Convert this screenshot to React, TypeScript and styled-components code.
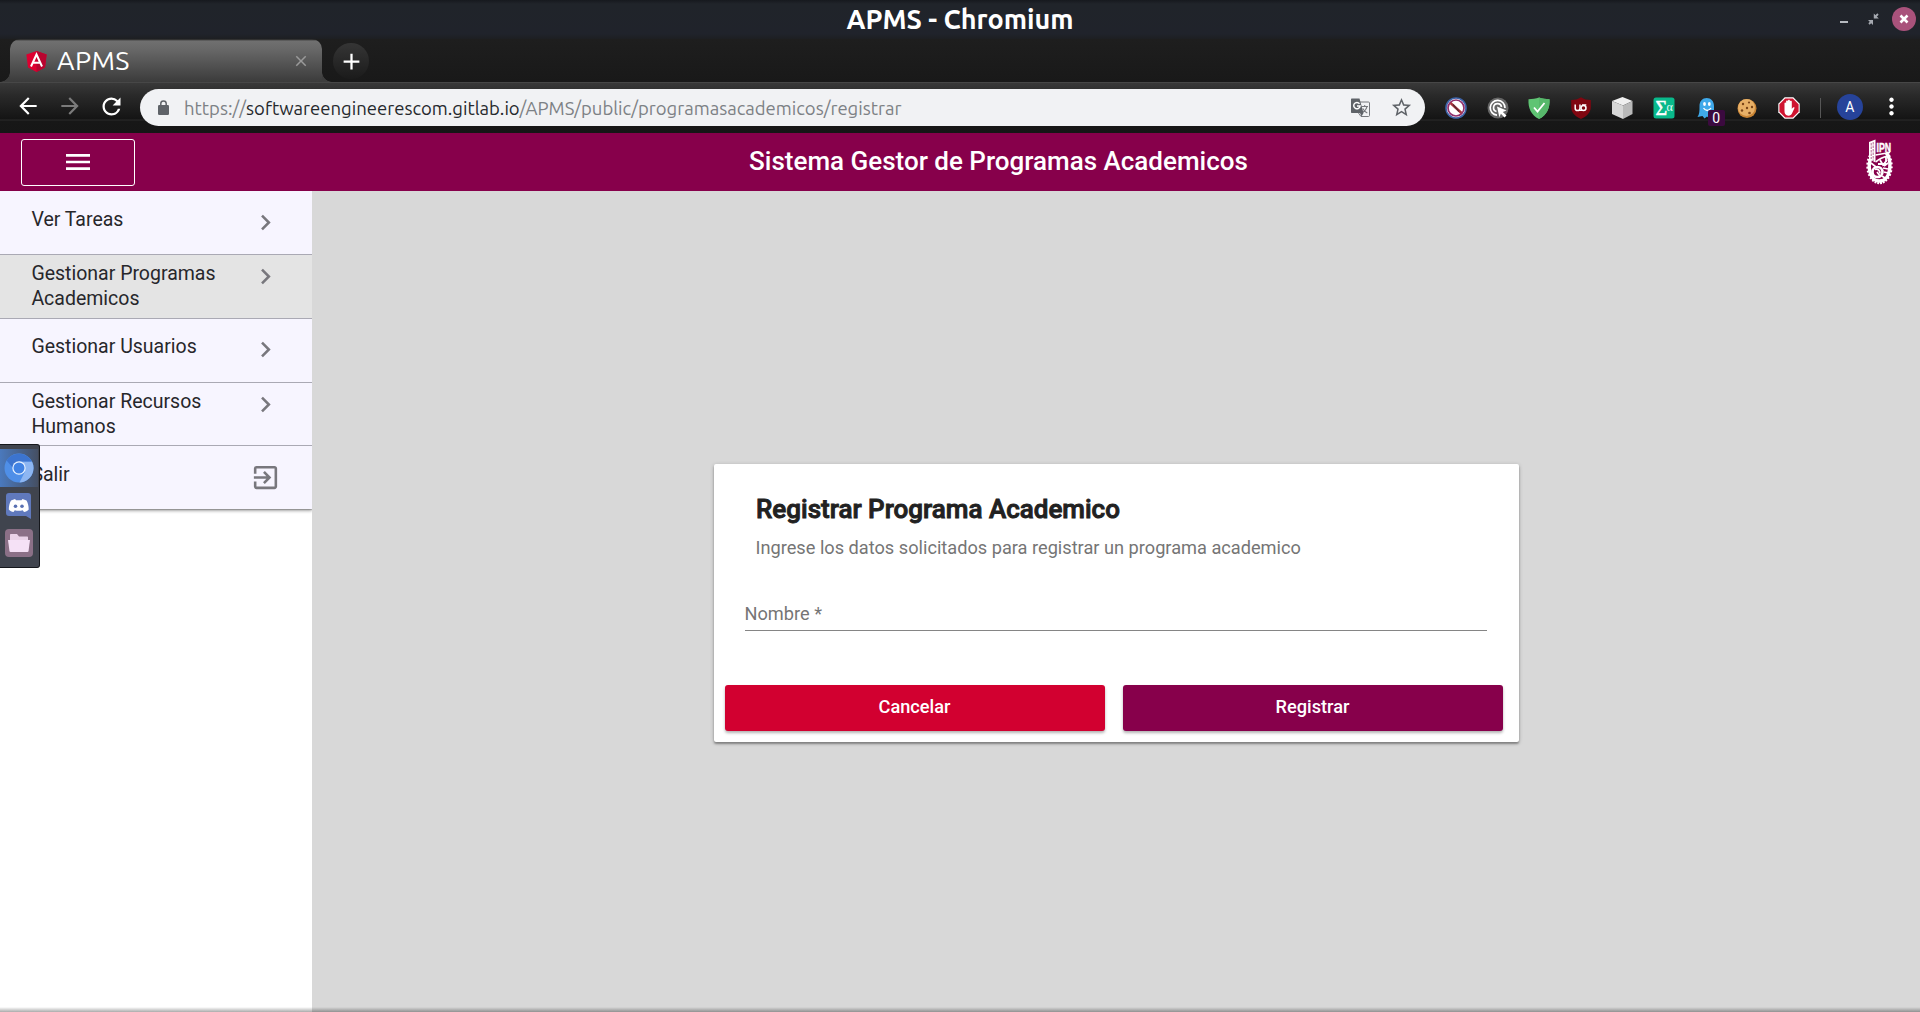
import React from "react";
import styled, { createGlobalStyle, css } from "styled-components";
import {
  MdArrowBack,
  MdArrowForward,
  MdRefresh,
  MdStarBorder,
  MdMenu,
  MdChevronRight,
  MdExitToApp,
  MdClose,
  MdMoreVert,
  MdAdd,
} from "react-icons/md";

const uiFont = `"Ubuntu", "Noto Sans", "Open Sans", sans-serif`;
const appFont = `Roboto, "Liberation Sans", sans-serif`;
const wine = "#87004b";

const GlobalStyle = createGlobalStyle`
  *, *::before, *::after { box-sizing: border-box; }
  body { margin: 0; overflow: hidden; background: #d8d8d8; }
  button { font: inherit; border: 0; padding: 0; background: none; color: inherit; }
  svg { display: block; flex: none; }
`;

const Screen = styled.div`
  position: relative;
  display: flex;
  flex-direction: column;
  width: 1920px;
  height: 1012px;
  overflow: hidden;
  font-family: ${appFont};
`;

/* ---------- window frame ---------- */

const TitleBar = styled.header`
  display: grid;
  grid-template-columns: 1fr auto 1fr;
  height: 39px;
  flex: none;
  color: #fff;
  font-family: ${uiFont};
  background: linear-gradient(#16191e 0, #20242a 4px, #20232b 34px, #1d1f22 39px);
`;

const WindowTitle = styled.h1`
  margin: 0;
  font-size: 27px;
  line-height: 39px;
  font-weight: 700;
  white-space: nowrap;
`;

const WindowControls = styled.div`
  grid-column: 3;
  display: flex;
  justify-content: flex-end;
  align-items: center;
  height: 38px;
  padding-right: 4px;
`;

const CloseWindow = styled.button`
  display: grid;
  place-items: center;
  width: 24px;
  height: 24px;
  margin-left: 13px;
  border-radius: 50%;
  background: #a9527b;
`;

const TabStrip = styled.div`
  display: flex;
  align-items: flex-start;
  height: 43px;
  flex: none;
  padding-left: 10px;
  background: linear-gradient(#1e1e1e, #191919);
`;

const Tab = styled.div`
  position: relative;
  display: flex;
  align-items: center;
  width: 312px;
  height: 43px;
  padding: 1px 12px 0 16px;
  border-radius: 10px 10px 0 0;
  color: #fff;
  font-family: ${uiFont};
  background: linear-gradient(#1c1c1c 0, #707070 2px, #686868 10px, #3b3b3b 43px);

  &::before,
  &::after {
    content: "";
    position: absolute;
    bottom: 0;
    width: 10px;
    height: 10px;
  }
  &::before {
    left: -10px;
    background: radial-gradient(circle at 0 0, transparent 9.5px, #3d3d3d 10px);
  }
  &::after {
    right: -10px;
    background: radial-gradient(circle at 100% 0, transparent 9.5px, #3d3d3d 10px);
  }
`;

const TabLabel = styled.span`
  flex: 1;
  margin-left: 10px;
  padding-bottom: 3px;
  font-size: 27px;
  line-height: 40px;
  letter-spacing: 0.4px;
`;

const NewTab = styled.button`
  display: grid;
  place-items: center;
  width: 36px;
  height: 36px;
  margin: 4px 0 0 11px;
  border-radius: 50%;
  color: #fff;
  background: linear-gradient(#353535, #1b1b1b);
`;

const Toolbar = styled.nav`
  display: flex;
  align-items: center;
  height: 51px;
  flex: none;
  padding: 0 14px 1px 15px;
  border-top: 1px solid #474747;
  color: #fff;
  background: linear-gradient(#393939 0, #2a2a2a 12px, #141414 36px, #2b2b2b 37px, #171717 38px, #161616 51px);
`;

const NavButtons = styled.div`
  display: flex;
  flex: none;
  gap: 15.5px;
  width: 125px;
  padding-bottom: 3px;
`;

const AddressBar = styled.div`
  display: flex;
  flex: none;
  align-items: center;
  width: 1285px;
  height: 37px;
  padding: 0 12px 0 18px;
  border-radius: 19px;
  color: #5f6368;
  background: #f1f2f4;
`;

const Url = styled.span`
  flex: 1;
  margin-left: 15px;
  padding-top: 1px;
  color: #7d8185;
  font-family: ${uiFont};
  font-size: 18.5px;
  line-height: 36px;
  white-space: nowrap;

  b {
    color: #26292d;
    font-weight: 400;
  }
`;

const AddressActions = styled.div`
  display: flex;
  align-items: center;
  gap: 20px;
`;

const Extensions = styled.div`
  display: flex;
  flex: none;
  align-items: center;
  gap: 19.6px;
  margin-left: 20px;
`;

const ExtensionSlot = styled.div`
  position: relative;
  width: 22px;
  height: 22px;
`;

const Count = styled.span`
  position: absolute;
  left: 13px;
  top: 13px;
  width: 17px;
  height: 16px;
  border-radius: 2px;
  color: #fff;
  background: #3b0a3f;
  font: 14px/17px ${appFont};
  text-align: center;
`;

const Divider = styled.i`
  flex: none;
  width: 1px;
  height: 20px;
  margin: 0 16px 0 20px;
  background: #565656;
`;

const Profile = styled.div`
  flex: none;
  width: 26px;
  height: 26px;
  margin-bottom: 2px;
  border-radius: 50%;
  background: #26439a;
  font: 14px/27px ${appFont};
  text-align: center;
`;

const MoreButton = styled.button`
  flex: none;
  margin-left: 15px;
  margin-bottom: 2px;
`;

/* ---------- application ---------- */

const AppBar = styled.header`
  display: flex;
  align-items: center;
  height: 58px;
  flex: none;
  padding: 0 26px 0 21px;
  color: #fff;
  background: ${wine};
`;

const MenuButton = styled.button`
  display: grid;
  place-items: center;
  width: 114px;
  height: 47px;
  border: 1px solid #fff;
  border-radius: 3px;
`;

const AppTitle = styled.h2`
  flex: 1;
  margin: 0;
  padding-bottom: 2px;
  padding-right: 4px;
  font-size: 26px;
  line-height: 34px;
  font-weight: 500;
  text-align: center;
`;

const Body = styled.div`
  display: flex;
  flex: 1;
  min-height: 0;
`;

const Sidebar = styled.aside`
  width: 312px;
  background: #fff;
`;

const MenuList = styled.ul`
  margin: 0;
  padding: 0;
  list-style: none;
  box-shadow: 0 2px 3px rgba(0, 0, 0, 0.32), 0 1px 1px rgba(0, 0, 0, 0.2);
`;

const MenuItem = styled.li<{ $active?: boolean; $lines?: number }>`
  display: flex;
  justify-content: space-between;
  height: 64px;
  padding: ${(p) => (p.$lines === 2 ? "6px" : "16px")} 31px 0 31.4px;
  border-bottom: 1px solid #aaa9b4;
  background: ${(p) => (p.$active ? "#e4e4e4" : "#f7f5ff")};

  &:nth-child(3) {
    padding-top: 15px;
  }
  &:nth-child(4) {
    height: 63px;
  }
  &:last-child {
    border-bottom: 0;
    height: 63px;
  }
`;

const MenuLabel = styled.span`
  width: 200px;
  color: #27272b;
  font-size: 19.5px;
  line-height: 25px;
`;

const MenuGlyph = styled.span`
  color: #78777d;
`;

const Content = styled.main`
  display: flex;
  flex: 1;
  align-items: center;
  justify-content: center;
  padding-top: 3px;
  background: #d8d8d8;
`;

const Card = styled.section`
  width: 805px;
  height: 278px;
  padding: 29px 15px 0 11px;
  border-radius: 2px;
  background: #fff;
  box-shadow: 0 1px 4px rgba(0, 0, 0, 0.22), 0 2px 2px rgba(0, 0, 0, 0.3);
`;

const CardTitle = styled.h3`
  margin: 0 0 0 31.5px;
  color: #212121;
  font-size: 26px;
  line-height: 32px;
  font-weight: 500;
  -webkit-text-stroke: 0.9px #212121;
  white-space: nowrap;
`;

const CardSubtitle = styled.p`
  margin: 10px 0 0 31px;
  color: #757575;
  font-size: 18.2px;
  line-height: 26px;
`;

const Field = styled.label`
  display: block;
  height: 29px;
  margin: 41px 17px 0 20px;
  border-bottom: 1px solid #858585;
  color: #757575;
  font-size: 18.2px;
  line-height: 24px;
`;

const Actions = styled.div`
  display: grid;
  grid-template-columns: 1fr 1fr;
  gap: 18px;
  margin-top: 54px;
  margin-right: 1px;
`;

const ActionButton = styled.button<{ $color: string }>`
  height: 46px;
  padding-bottom: 3px;
  border-radius: 3px;
  color: #fff;
  background: ${(p) => p.$color};
  font-size: 18.2px;
  font-weight: 500;
  box-shadow: 0 2px 3px rgba(0, 0, 0, 0.3);
`;

const BottomShade = styled.div`
  position: absolute;
  inset: auto 0 0 0;
  height: 5px;
  background: linear-gradient(rgba(0, 0, 0, 0), rgba(0, 0, 0, 0.33));
`;

const Dock = styled.div`
  position: absolute;
  left: 0;
  top: 444px;
  display: flex;
  flex-direction: column;
  width: 40px;
  height: 124px;
  padding: 4px 1px 5px 0;
  border: 1px solid #15171c;
  border-left: 0;
  border-radius: 0 3px 3px 0;
  background: #40444e;
`;

const DockItem = styled.div<{ $current?: boolean }>`
  display: grid;
  place-items: center;
  height: 38px;
  ${(p) =>
    p.$current &&
    css`
      background: linear-gradient(90deg, #4a79bd, #454f63);
    `}
`;

/* ---------- drawings ---------- */

const AngularMark = () => (
  <svg width="21" height="21" viewBox="0 0 21 21">
    <path d="M10.5 0 20.6 3.5 19 16.5 10.5 21 2 16.5.4 3.5Z" fill="#dd0031" />
    <path d="M10.5 0 20.6 3.5 19 16.5 10.5 21Z" fill="#b8042f" />
    <path d="m5 15.5 5.5-12 5.5 12M7.2 11.8h6.6" fill="none" stroke="#fff" strokeWidth="2" />
  </svg>
);

const WindowIcons = () => (
  <svg width="42" height="20" viewBox="0 0 42 20">
    <path d="M3 12h8v2H3z" fill="#b6bac0" />
    <path d="m41 5-3.5 3.5M32 15l3.5-3.5" stroke="#a5a9b0" strokeWidth="1.8" />
    <path d="M36.8 4.5v5h5zM36 11h-5l5 5z" fill="#a5a9b0" />
  </svg>
);

const Padlock = () => (
  <svg width="11" height="15" viewBox="0 0 11 15">
    <rect y="5" width="11" height="10" rx="1.2" fill="#5f6368" />
    <path d="M2.8 6V3.6a2.7 2.7 0 0 1 5.4 0V6" fill="none" stroke="#5f6368" strokeWidth="1.5" />
  </svg>
);

const TranslatePages = () => (
  <svg width="19" height="19" viewBox="0 0 19 19">
    <path d="M7.5 4h10c.6 0 1 .4 1 1v12.5c0 .6-.4 1-1 1H10L7.5 15Z" fill="#f1f2f4" stroke="#77797d" />
    <path d="M10.5 8.500h6.500M13.700 7v1.500M16 8.500c-.5 2.500-2.500 4.800-4.500 6M11.800 10.500c1 1.800 2.500 3.500 4.500 4.500" fill="none" stroke="#77797d" strokeWidth="1.1" />
    <path d="M1 .5h7.500l4 14.500H1c-.6 0-1-.4-1-1v-12.500c0-.6.4-1 1-1Z" fill="#5f6368" />
    <path d="M8.500 5.700a3.200 3.200 0 1 0 .6 2.300H6" fill="none" stroke="#fff" strokeWidth="1.5" />
    <path d="M9 15h3.500L10.500 18.500Z" fill="#5f6368" />
  </svg>
);

const BlockedDisc = () => (
  <svg width="22" height="22" viewBox="0 0 22 22">
    <circle cx="11" cy="11" r="10" fill="#fff" stroke="#3d63a8" strokeWidth="1.6" />
    <circle cx="11" cy="11" r="8" fill="#fff" stroke="#8f2f6c" strokeWidth="1.7" />
    <path d="m5.500 6 11 10" stroke="#a8343c" strokeWidth="2.4" />
    <path d="m8 7.500 6 7" stroke="#5a2a30" strokeWidth="1.2" />
  </svg>
);

const ClickTarget = () => (
  <svg width="22" height="22" viewBox="0 0 22 22">
    <circle cx="11" cy="11" r="10.5" fill="#656565" />
    <g fill="none" stroke="#fff" strokeWidth="1.7">
      <path d="M10 18.2A7.4 7.4 0 1 1 18 11" />
      <path d="M9.5 14.5A4 4 0 1 1 14.5 10" />
    </g>
    <path d="m10 9.5 9.5 4-3.7 1.4 3.7 3.6-2 2-3.6-3.7-1.5 3.4Z" fill="#fff" />
  </svg>
);

const GreenShield = () => (
  <svg width="22" height="22" viewBox="0 0 22 22">
    <path d="M11 .5c3 1.200 7 1.700 10.500 1.700C22 11 19 18 11 22 3 18 0 11 .5 2.200 4 2.200 8 1.700 11 .5Z" fill="#5fc473" />
    <path d="M11 .5c3 1.200 7 1.700 10.500 1.700C22 11 19 18 11 22Z" fill="#57b86b" />
    <path d="m6 10.500 3.500 4L16.500 6" fill="none" stroke="#fff" strokeWidth="1.8" />
  </svg>
);

const DarkShield = () => (
  <svg width="22" height="22" viewBox="0 0 22 22">
    <path d="M11 .3c3 2.200 6 2.700 9.800 2.700V10c0 6-4.500 9.500-9.800 12C5.700 19.500 1.200 16 1.200 10V3C5 3 8 2.500 11 .3Z" fill="#800610" />
    <path d="M5.200 7.500v3.700a2.400 2.400 0 0 0 4.800 0V7.500" fill="none" stroke="#fff" strokeWidth="1.5" />
    <circle cx="13.5" cy="11" r="2.5" fill="none" stroke="#fff" strokeWidth="1.5" />
    <path d="M9 13.500h4.500M12 7.800h4.300" stroke="#fff" strokeWidth="1.2" />
  </svg>
);

const Cube = () => (
  <svg width="22" height="22" viewBox="0 0 22 22">
    <path d="M11.500 0 21.500 4 12 8.500 1 4Z" fill="#efefef" />
    <path d="M1 4 12 8.500V22L1 17Z" fill="#d6d6d6" />
    <path d="M21.500 4 12 8.500V22l9.500-5Z" fill="#b9b9b9" />
  </svg>
);

const SigmaTile = () => (
  <svg width="22" height="22" viewBox="0 0 22 22">
    <rect x=".5" y=".5" width="21" height="21" rx="2.5" fill="#09b98b" />
    <text x="2.5" y="18" fill="#fff" stroke="#fff" strokeWidth=".5" fontFamily="Liberation Serif, serif" fontSize="20">
      Σ
    </text>
    <text x="13.5" y="14" fill="#e6fff8" fontFamily="Liberation Serif, serif" fontSize="12">
      α
    </text>
  </svg>
);

const Ghost = () => (
  <svg width="22" height="22" viewBox="0 0 22 22">
    <path d="M4.500 9C4.500 4 7.500 1 11.700 1S19 4 19 9v11l-2-1-2.500 2.500-2.500-2-2.500 2-2-2.500L2.500 20c2-3 2-6 2-11Z" fill="#3fa9ea" />
    <ellipse cx="9.5" cy="7" rx="1.4" ry="2" fill="#fff" />
    <ellipse cx="14.3" cy="7" rx="1.4" ry="2" fill="#fff" />
    <path d="M8.500 11c2 3.300 5.500 3.300 7.500 0" fill="none" stroke="#fff" strokeWidth="1.3" />
  </svg>
);

const Cookie = () => (
  <svg width="22" height="22" viewBox="0 0 22 22">
    <circle cx="11" cy="11.5" r="9.5" fill="#c98434" />
    <circle cx="10.5" cy="10.5" r="8.5" fill="#e8b067" />
    <g fill="#7a4519">
      <circle cx="7" cy="7" r="1.2" />
      <circle cx="13" cy="5.5" r="1.1" />
      <circle cx="11" cy="11" r="1.2" />
      <circle cx="16" cy="10" r="1.2" />
      <circle cx="6" cy="13.5" r="1.2" />
      <circle cx="13.5" cy="16" r="1.3" />
    </g>
  </svg>
);

const StopHand = () => (
  <svg width="22" height="22" viewBox="0 0 22 22">
    <path d="M6.700.3h8.600l6.400 6.400v8.600l-6.400 6.400H6.700L.3 15.300V6.700Z" fill="#fff" />
    <path d="M7.200 1.400h7.600l5.800 5.800v7.600l-5.800 5.800H7.200l-5.800-5.800V7.200Z" fill="#cf1430" />
    <path d="M6.500 11V6.300c0-1.200 1.600-1.200 1.600 0V4.500c0-1.300 1.900-1.300 1.900 0v-.7c0-1.300 1.900-1.300 1.900 0v1c0-1.300 1.900-1.300 1.900 0V12c1-2.200 3-2 2.700-.9l-2.300 5c-.8 2-2 2.600-3.800 2.600-2.800 0-3.900-2-3.900-4.400Z" fill="#fff" />
  </svg>
);

const gearTeeth = Array.from({ length: 21 }, (_, i) => -48 + (i * 262) / 20);

const InstituteCrest = () => (
  <svg width="28" height="46" viewBox="0 0 28 46">
    <path d="M20 13.500C26.500 20 25.500 42 13.500 42 3 42 2 27 4.500 20" fill="none" stroke="#fff" strokeWidth="3.400" />
    {gearTeeth.map((deg) => {
      const a = (deg * Math.PI) / 180;
      return (
        <path
          key={deg}
          d={`M${13.5 + 10.5 * Math.cos(a)} ${27 + 15.5 * Math.sin(a)}L${13.5 + 13.2 * Math.cos(a)} ${27 + 18.3 * Math.sin(a)}`}
          stroke="#fff"
          strokeWidth="1.9"
        />
      );
    })}
    <path d="M3 3 9.500.5v23L3 20Z" fill="#fff" />
    <path d="M5.200 4v16M7.200 3v19" stroke={wine} strokeWidth=".6" strokeDasharray="2.500 1" />
    <text
      x="10.5"
      y="12.8"
      fill="#fff"
      stroke="#fff"
      strokeWidth=".5"
      fontFamily="Liberation Sans, sans-serif"
      fontSize="13"
      fontWeight="700"
      textLength="14.5"
      lengthAdjust="spacingAndGlyphs"
    >
      IPN
    </text>
    <path d="M9.500 16 24 13.500" stroke="#fff" strokeWidth="1.4" />
    <path d="M10 23c2-3 6-4 11-6M14 21l3 5 4-5M18 27l4-3M12 25h8M20 17v6" stroke="#fff" strokeWidth="1.8" fill="none" />
    <circle cx="11.5" cy="33" r="5" fill="none" stroke="#fff" strokeWidth="2.6" />
    <path d="M9 30.500c3-1 5 1 5 4M11 33l3 4M17 29l5 1M18 33l4 1M16 37l3 2M5 24l5 4" fill="none" stroke="#fff" strokeWidth="1.7" />
  </svg>
);

const ChromiumMark = () => (
  <svg width="30" height="30" viewBox="0 0 30 30">
    <circle cx="15" cy="15" r="14.5" fill="#4f8fe8" />
    <path d="M15 8.500h13a14.500 14.500 0 0 1-12.500 21L21 18.500Z" fill="#8db6f2" />
    <path d="M2.600 7.500A14.500 14.500 0 0 1 27.800 8.500H15L9 15Z" fill="#3c74cf" />
    <circle cx="15" cy="15" r="6.7" fill="#eaf3ff" />
    <circle cx="15" cy="15" r="5.5" fill="#4183e4" />
  </svg>
);

const ChatMark = () => (
  <svg width="28" height="28" viewBox="0 0 28 28">
    <path d="M4 1h19a3 3 0 0 1 3 3v23l-5-3H4a3 3 0 0 1-3-3V4a3 3 0 0 1 3-3Z" fill="#6079bd" />
    <path d="m10 7-4 1.500C4.500 11 3.800 14 3.800 17.500c1.200 1.500 3 2.200 4.700 2.400l1.300-1.700c2.500.8 5.400.8 7.900 0l1.300 1.700c1.700-.2 3.500-.9 4.700-2.400 0-3.500-.7-6.500-2.200-9l-4-1.500-1 1.300h-5.400Z" fill="#fff" />
    <circle cx="10.5" cy="14.2" r="1.8" fill="#5870b2" />
    <circle cx="17" cy="14.2" r="1.8" fill="#5870b2" />
  </svg>
);

const FolderMark = () => (
  <svg width="28" height="28" viewBox="0 0 28 28">
    <rect width="28" height="28" rx="4" fill="#8b7087" />
    <path d="M5 6c0-.6.4-1 1-1h6l2 2.500h8c.6 0 1 .4 1 1V12H5Z" fill="#ead2e8" />
    <path d="M3 11h22l-1.500 11.200c-.1.500-.5.800-1 .8h-17c-.5 0-.9-.3-1-.8Z" fill="#f5e1f6" />
  </svg>
);

const menu = [
  { label: "Ver Tareas" },
  { label: "Gestionar Programas Academicos", lines: 2, active: true },
  { label: "Gestionar Usuarios" },
  { label: "Gestionar Recursos Humanos", lines: 2 },
  { label: "Salir", exit: true },
];

const extensions = [BlockedDisc, ClickTarget, GreenShield, DarkShield, Cube, SigmaTile, Ghost, Cookie, StopHand];

export default function App() {
  return (
    <Screen>
      <GlobalStyle />
      <TitleBar>
        <span />
        <WindowTitle>APMS - Chromium</WindowTitle>
        <WindowControls>
          <WindowIcons />
          <CloseWindow aria-label="Close window">
            <svg width="10" height="10" viewBox="0 0 10 10">
              <path d="m1.500 1.500 7 7m0-7-7 7" stroke="#fff" strokeWidth="2.6" />
            </svg>
          </CloseWindow>
        </WindowControls>
      </TitleBar>
      <TabStrip>
        <Tab>
          <AngularMark />
          <TabLabel>APMS</TabLabel>
          <MdClose size={18} color="#9a9a9a" />
        </Tab>
        <NewTab aria-label="New tab">
          <MdAdd size={27} />
        </NewTab>
      </TabStrip>
      <Toolbar>
        <NavButtons>
          <MdArrowBack size={26} />
          <MdArrowForward size={26} color="#7b7b7b" />
          <MdRefresh size={27} />
        </NavButtons>
        <AddressBar>
          <Padlock />
          <Url>
            https://<b>softwareengineerescom.gitlab.io</b>/APMS/public/programasacademicos/registrar
          </Url>
          <AddressActions>
            <TranslatePages />
            <MdStarBorder size={23} />
          </AddressActions>
        </AddressBar>
        <Extensions>
          {extensions.map((Icon, i) => (
            <ExtensionSlot key={i}>
              <Icon />
              {Icon === Ghost && <Count>0</Count>}
            </ExtensionSlot>
          ))}
        </Extensions>
        <Divider />
        <Profile>A</Profile>
        <MoreButton aria-label="More">
          <MdMoreVert size={27} />
        </MoreButton>
      </Toolbar>
      <AppBar>
        <MenuButton aria-label="Menu">
          <MdMenu size={32} />
        </MenuButton>
        <AppTitle>Sistema Gestor de Programas Academicos</AppTitle>
        <InstituteCrest />
      </AppBar>
      <Body>
        <Sidebar>
          <MenuList>
            {menu.map((item) => (
              <MenuItem key={item.label} $active={item.active} $lines={item.lines}>
                <MenuLabel>{item.label}</MenuLabel>
                <MenuGlyph>{item.exit ? <MdExitToApp size={31} /> : <MdChevronRight size={31} />}</MenuGlyph>
              </MenuItem>
            ))}
          </MenuList>
        </Sidebar>
        <Content>
          <Card>
            <CardTitle>Registrar Programa Academico</CardTitle>
            <CardSubtitle>Ingrese los datos solicitados para registrar un programa academico</CardSubtitle>
            <Field>Nombre *</Field>
            <Actions>
              <ActionButton $color="#d20030">Cancelar</ActionButton>
              <ActionButton $color={wine}>Registrar</ActionButton>
            </Actions>
          </Card>
        </Content>
      </Body>
      <Dock>
        <DockItem $current>
          <ChromiumMark />
        </DockItem>
        <DockItem>
          <ChatMark />
        </DockItem>
        <DockItem>
          <FolderMark />
        </DockItem>
      </Dock>
      <BottomShade />
    </Screen>
  );
}
